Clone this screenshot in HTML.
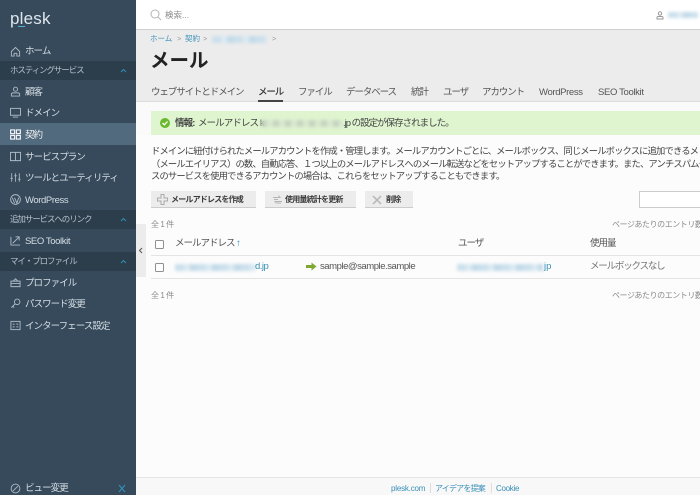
<!DOCTYPE html>
<html lang="ja"><head><meta charset="utf-8"><title>メール</title>
<style>
*{box-sizing:border-box;margin:0;padding:0}
html,body{width:700px;height:495px;overflow:hidden;background:#fcfcfc}
body{font-family:"Liberation Sans","Noto Sans CJK JP",sans-serif;font-size:9.5px;color:#4a4a4a;position:relative}
.a{position:absolute;white-space:nowrap}
#side{position:absolute;left:0;top:0;width:136px;height:495px;background:#364a5c}
.n{position:absolute;left:25px;margin-top:2px;color:#d5dde3;font-size:9.5px;letter-spacing:-.95px;line-height:14px;white-space:nowrap}
.n.l{letter-spacing:-.4px}
.h{position:absolute;left:0;width:136px;height:19px;background:#2c3d4c;color:#b4c0ca;font-size:8.5px;letter-spacing:-1.1px;line-height:19px;padding-left:10px;white-space:nowrap}
.h svg{position:absolute;left:120px;top:7px}
svg.i{position:absolute;left:10px;width:11px;height:11px;margin-top:.5px}
.bl{position:absolute;filter:blur(1.5px);background:repeating-linear-gradient(90deg,#cbe0ec 0 9px,#dbe9f1 9px 15px,#c3dae8 15px 22px)}
.t{position:absolute;top:86px;color:#555;font-size:9.5px;letter-spacing:-1.1px;line-height:13px;white-space:nowrap}
.t.l{letter-spacing:-.35px}
.btn{position:absolute;top:191px;height:17px;background:#ececec;border-bottom:1px solid #ccc;color:#3a3a3a;font-weight:bold;font-size:8px;letter-spacing:-.8px;line-height:17px;white-space:nowrap}
.cb{position:absolute;width:9px;height:9px;border:1px solid #8f8f8f;border-radius:1.5px;background:#fff}
.g{color:#8a8a8a;font-size:8px;letter-spacing:-.45px}
.lnk{color:#3a8fb7}
.r{position:absolute;font-size:9.5px;line-height:14px;color:#555;letter-spacing:-1px;white-space:nowrap}
</style></head><body>

<div id="side">
<div class="a" style="left:10px;top:6px;font-size:17px;color:#dfe6eb;letter-spacing:.2px;line-height:26px">plesk</div>
<div class="a" style="left:18px;top:26px;width:7px;height:1px;background:#4fb3d9"></div>

<svg class="i" style="top:45px" viewBox="0 0 12 12" fill="none" stroke="#aebbc5"><path d="M1.500 6 6 1.500 10.500 6V11H7.500V8H4.500V11H1.500Z"/></svg>
<div class="n" style="top:43px">ホーム</div>

<div class="h" style="top:61px">ホスティングサービス<svg width="7" height="5" viewBox="0 0 7 5" fill="none" stroke="#2f8fb5"><path d="M1 4 3.500 1.500 6 4"/></svg></div>

<svg class="i" style="top:85px" viewBox="0 0 12 12" fill="none" stroke="#aebbc5"><circle cx="6" cy="3.500" r="2.200"/><path d="M1.500 11V9Q1.500 7.500 3.500 7.500H8.500Q10.500 7.500 10.500 9V11Z"/></svg>
<div class="n" style="top:84px">顧客</div>

<svg class="i" style="top:106px" viewBox="0 0 12 12" fill="none" stroke="#aebbc5"><rect x=".5" y="1.500" width="11" height="7.500"/><path d="M3 11H9"/></svg>
<div class="n" style="top:105px">ドメイン</div>

<div class="a" style="left:0;top:123px;width:136px;height:22px;background:#526a7e"></div>
<svg class="i" style="top:128px" viewBox="0 0 12 12" fill="none" stroke="#eef2f5" stroke-width="1.300"><rect x=".7" y="1" width="4.300" height="4"/><rect x="7" y="1" width="4.300" height="4"/><rect x=".7" y="7" width="4.300" height="4"/><rect x="7" y="7" width="4.300" height="4"/></svg>
<div class="n" style="top:127px;color:#f0f3f5">契約</div>

<svg class="i" style="top:150px" viewBox="0 0 12 12" fill="none" stroke="#aebbc5"><path d="M.5 1.500H11.500V10.500H.5ZM6 1.500V10.500"/></svg>
<div class="n" style="top:149px">サービスプラン</div>

<svg class="i" style="top:171px" viewBox="0 0 13 12" fill="none" stroke="#aebbc5"><path d="M2 1V11M6.500 1V11M11 1V11M.5 7H3.500M5 4H8M9.500 8H12.500"/></svg>
<div class="n" style="top:170px">ツールとユーティリティ</div>

<svg class="i" style="top:193px" viewBox="0 0 12 12" fill="none" stroke="#aebbc5"><circle cx="6" cy="6" r="5.300"/><path d="M2.500 4 5 10M5 4 7.500 10 9.500 4"/></svg>
<div class="n l" style="top:192px">WordPress</div>

<div class="h" style="top:210px">追加サービスへのリンク<svg width="7" height="5" viewBox="0 0 7 5" fill="none" stroke="#2f8fb5"><path d="M1 4 3.500 1.500 6 4"/></svg></div>

<svg class="i" style="top:234px" viewBox="0 0 12 12" fill="none" stroke="#aebbc5"><path d="M1 2V11H11M3 9 9.500 2.500M6 2H10V6"/></svg>
<div class="n l" style="top:233px">SEO Toolkit</div>

<div class="h" style="top:252px">マイ・プロファイル<svg width="7" height="5" viewBox="0 0 7 5" fill="none" stroke="#2f8fb5"><path d="M1 4 3.500 1.500 6 4"/></svg></div>

<svg class="i" style="top:276px" viewBox="0 0 12 12" fill="none" stroke="#aebbc5"><path d="M1 4.500H11V10.500H1ZM3.500 4.500 6 2 8.500 4.500M1 7H11"/></svg>
<div class="n" style="top:275px">プロファイル</div>

<svg class="i" style="top:297px" viewBox="0 0 12 12" fill="none" stroke="#aebbc5"><circle cx="7.800" cy="4.200" r="3"/><path d="M5.500 6.500 1.500 10.500M3 9 4.500 10.500"/></svg>
<div class="n" style="top:296px">パスワード変更</div>

<svg class="i" style="top:319px" viewBox="0 0 12 12" fill="none" stroke="#aebbc5"><rect x="1" y="1.500" width="10" height="9"/><path d="M3 4.500H5M3 7.500H5M7 4.500H9M7 7.500H9"/></svg>
<div class="n" style="top:318px">インターフェース設定</div>

<svg class="i" style="top:482px" viewBox="0 0 12 12" fill="none" stroke="#aebbc5"><circle cx="6" cy="6" r="4.800"/><path d="M3.500 8.500 8.500 3.500"/></svg>
<div class="n" style="top:480px">ビュー変更</div>
<svg class="a" style="left:118px;top:484px" width="8" height="9" viewBox="0 0 8 9" fill="none" stroke="#2f8fb5" stroke-width="1.200"><path d="M1 1 7 8M7 1 1 8"/></svg>
</div>

<div class="a" style="left:136px;top:224px;width:10px;height:53px;background:#ececec"></div>
<svg class="a" style="left:138px;top:247px" width="5" height="7" viewBox="0 0 5 7" fill="none" stroke="#555"><path d="M4 1 1.500 3.500 4 6"/></svg>

<div class="a" style="left:136px;top:0;width:564px;height:29px;background:#fff"></div>
<div class="a" style="left:136px;top:29px;width:564px;height:72px;background:#ececec"></div>
<div class="a" style="left:136px;top:29px;width:564px;height:1px;background:#cfcfcf"></div>
<div class="a" style="left:136px;top:101px;width:564px;height:1px;background:#dcdcdc"></div>
<div class="a" style="left:136px;top:102px;width:564px;height:33px;background:#fafafa"></div>

<svg class="a" style="left:150px;top:9px" width="12" height="12" viewBox="0 0 12 12" fill="none" stroke="#b5b5b5"><circle cx="5" cy="5" r="4"/><path d="M8 8 11 11"/></svg>
<div class="a" style="left:165px;top:8px;font-size:8.500px;line-height:14px;color:#8a8a8a">検索...</div>

<svg class="a" style="left:656px;top:11px" width="8" height="9" viewBox="0 0 8 9" fill="none" stroke="#999"><circle cx="4" cy="2.500" r="1.700"/><path d="M1 8V6.500Q1 5.500 2.500 5.500H5.500Q7 5.500 7 6.500V8Z"/></svg>
<div class="bl" style="left:668px;top:12px;width:30px;height:6px"></div>

<div class="a lnk" style="left:150px;top:33px;font-size:7.500px;line-height:12px">ホーム</div>
<div class="a" style="left:177px;top:33px;font-size:7.500px;line-height:12px;color:#999">&gt;</div>
<div class="a lnk" style="left:185px;top:33px;font-size:7.500px;line-height:12px">契約</div>
<div class="a" style="left:203px;top:33px;font-size:7.500px;line-height:12px;color:#999">&gt;</div>
<div class="bl" style="left:212px;top:36px;width:55px;height:7px"></div>
<div class="a" style="left:272px;top:33px;font-size:7.500px;line-height:12px;color:#999">&gt;</div>

<div class="a" style="left:150px;top:46px;font-size:19.500px;font-weight:bold;line-height:30px;color:#222">メール</div>

<div class="t" style="left:151px">ウェブサイトとドメイン</div>
<div class="t" style="left:258px;color:#333;font-weight:500">メール</div>
<div class="a" style="left:258px;top:100px;width:25px;height:2px;background:#444"></div>
<div class="t" style="left:298px">ファイル</div>
<div class="t" style="left:346px">データベース</div>
<div class="t" style="left:411px">統計</div>
<div class="t" style="left:443px">ユーザ</div>
<div class="t" style="left:482px">アカウント</div>
<div class="t l" style="left:539px">WordPress</div>
<div class="t l" style="left:598px">SEO Toolkit</div>

<div class="a" style="left:151px;top:111px;width:549px;height:24px;background:#dff5cf"></div>
<svg class="a" style="left:160px;top:118px" width="10" height="10" viewBox="0 0 10 10"><circle cx="5" cy="5" r="5" fill="#6ab82e"/><path d="M2.500 5 4.300 6.800 7.500 3.500" fill="none" stroke="#fff" stroke-width="1.300"/></svg>
<div class="a" style="left:175px;top:117px;font-size:9.500px;letter-spacing:-.9px;line-height:13px;color:#444"><b>情報:</b>&nbsp; メールアドレス k</div>
<div class="bl" style="left:261px;top:120px;width:82px;height:7px;background:repeating-linear-gradient(90deg,#c6d3c0 0 6px,#d8e8cf 6px 12px)"></div>
<div class="a" style="left:343px;top:117px;font-size:9.500px;letter-spacing:-1px;line-height:13px;color:#444">.jp の設定が保存されました。</div>

<div class="a" style="left:151px;top:145px;width:549px;overflow:hidden;font-size:9.300px;letter-spacing:-.85px;line-height:12.500px;color:#444">ドメインに紐付けられたメールアカウントを作成・管理します。メールアカウントごとに、メールボックス、同じメールボックスに追加できるメ<br>（メールエイリアス）の数、自動応答、１つ以上のメールアドレスへのメール転送などをセットアップすることができます。また、アンチスパムや<br>スのサービスを使用できるアカウントの場合は、これらをセットアップすることもできます。</div>

<div class="btn" style="left:151px;width:105px;padding-left:20px">メールアドレスを作成</div>
<svg class="a" style="left:157px;top:194px" width="11" height="11" viewBox="0 0 11 11" fill="none" stroke="#aaa"><path d="M4 .5H7V4H10.500V7H7V10.500H4V7H.5V4H4Z"/></svg>
<div class="btn" style="left:265px;width:91px;padding-left:20px">使用量統計を更新</div>
<svg class="a" style="left:272px;top:194px" width="11" height="11" viewBox="0 0 11 11" fill="none" stroke="#b5b5b5"><path d="M1 3.500H8L6.500 1.500M10 7.500H3L4.500 9.500M2 5.500H6M5 9H9"/></svg>
<div class="btn" style="left:365px;width:48px;padding-left:21px">削除</div>
<svg class="a" style="left:372px;top:195px" width="10" height="10" viewBox="0 0 10 10" fill="none" stroke="#b5b5b5" stroke-width="1.500"><path d="M1 1 9 9M9 1 1 9"/></svg>
<div class="a" style="left:639px;top:191px;width:61px;height:17px;background:#fff;border:1px solid #ccc;border-right:none"></div>

<div class="a g" style="left:151px;top:219px;line-height:12px">全 1 件</div>
<div class="a g" style="left:612px;top:219px;width:88px;overflow:hidden;line-height:12px">ページあたりのエントリ数</div>

<div class="cb" style="left:155px;top:240px"></div>
<div class="r" style="left:175px;top:237px">メールアドレス <span class="lnk">↑</span></div>
<div class="r" style="left:458px;top:237px">ユーザ</div>
<div class="r" style="left:590px;top:237px">使用量</div>
<div class="a" style="left:151px;top:255px;width:549px;height:1px;background:#e4e4e4"></div>

<div class="cb" style="left:155px;top:263px"></div>
<div class="bl" style="left:175px;top:264px;width:81px;height:7px"></div>
<div class="r lnk" style="left:255px;top:260px;letter-spacing:-.5px;color:#3a8fb7">d.jp</div>
<svg class="a" style="left:306px;top:262px" width="11" height="9" viewBox="0 0 11 9"><path d="M0 3H5.500V.5L10.500 4.500 5.500 8.500V6H0Z" fill="#7fa832"/></svg>
<div class="r" style="left:320px;top:260px;letter-spacing:-.45px">sample@sample.sample</div>
<div class="bl" style="left:457px;top:264px;width:86px;height:7px"></div>
<div class="r" style="left:544px;top:260px;letter-spacing:0;color:#3a8fb7">jp</div>
<div class="r" style="left:590px;top:260px;letter-spacing:-1.2px;color:#777">メールボックスなし</div>
<div class="a" style="left:151px;top:278px;width:549px;height:1px;background:#e4e4e4"></div>

<div class="a g" style="left:151px;top:290px;line-height:12px">全 1 件</div>
<div class="a g" style="left:612px;top:290px;width:88px;overflow:hidden;line-height:12px">ページあたりのエントリ数</div>

<div class="a" style="left:136px;top:477px;width:564px;height:18px;background:#f8f8f8;border-top:1px solid #e4e4e4"></div>
<div class="a lnk" style="left:391px;top:482px;font-size:8px;letter-spacing:-.2px;line-height:13px">plesk.com</div>
<div class="a" style="left:430px;top:483px;width:1px;height:10px;background:#ddd"></div>
<div class="a lnk" style="left:435px;top:482px;font-size:8px;letter-spacing:-.8px;line-height:13px">アイデアを提案</div>
<div class="a" style="left:491px;top:483px;width:1px;height:10px;background:#ddd"></div>
<div class="a lnk" style="left:496px;top:482px;font-size:8px;letter-spacing:-.3px;line-height:13px">Cookie</div>
</body></html>
